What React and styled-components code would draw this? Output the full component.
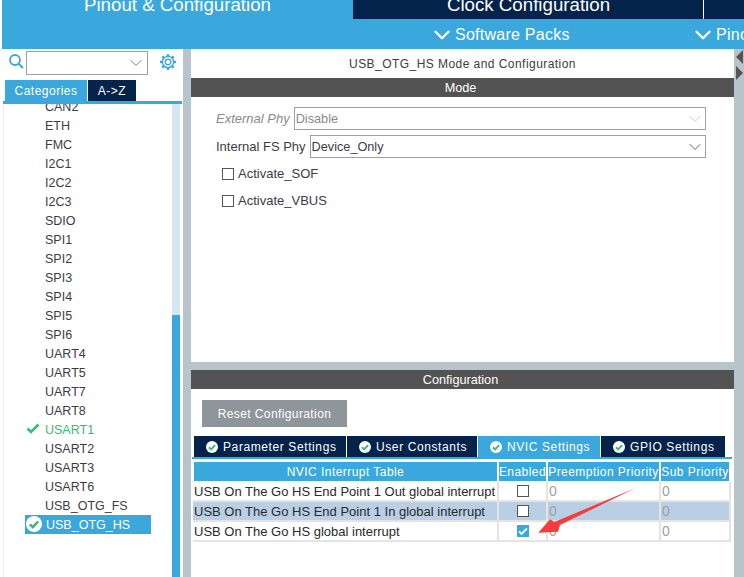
import React from 'react';
import styled, { createGlobalStyle } from 'styled-components';
import { ChevronDown } from 'lucide-react';

const Global = createGlobalStyle`
  html, body { margin: 0; padding: 0; background: #fff; overflow: hidden; }
  * { box-sizing: border-box; }
  #root { width: 744px; height: 577px; }
`;
const BLUE = '#3aa8dc';
const NAVY = '#03234b';
const GRAY = '#b8c4cb';

const Page = styled.div`
  position: relative;
  width: 744px; height: 577px; overflow: hidden;
  display: flex; flex-direction: column;
  font-family: "Liberation Sans", Arial, sans-serif;
  font-size: 12px; color: #3c3c46;
`;
const Header = styled.div`
  height: 49px; flex: none; margin-left: 2px; background: ${BLUE};
  display: flex; flex-direction: column;
`;
const TopTabs = styled.div`display: flex; height: 19px; overflow: hidden; background: ${NAVY};`;
const TopTab = styled.div`
  width: ${p => p.$w}px; flex: none; height: 19px; display: flex; justify-content: center; align-items: flex-end;
  padding-bottom: 5px; line-height: 19px; margin-right: 1px; color: #fff; font-size: 18.7px; white-space: nowrap;
  background: ${p => (p.$active ? BLUE : NAVY)};
  border-right: ${p => (p.$rule ? '1px solid #fff' : 'none')};
`;
const SubBar = styled.div`
  height: 30px; display: flex; align-items: center; color: #fff; font-size: 16px; letter-spacing: .25px;
  padding: 1px 0 0 427px; white-space: nowrap; overflow: hidden;
`;
const SubItem = styled.div`
  display: flex; align-items: center; width: ${p => p.$w}px; flex: none;
  svg { flex: none; }
`;
const Body = styled.div`flex: 1; display: flex; min-height: 0;`;
const Side = styled.div`
  width: 183px; flex: none; display: flex; flex-direction: column; padding-left: 3px; background: #fff;
`;
const SearchRow = styled.div`
  height: 31px; display: flex; align-items: center; padding: 0 0 6px 6px; color: ${BLUE};
  svg { flex: none; }
`;
const Combo = styled.div`
  width: 122px; height: 24px; margin: 2px 0 0 2px; border: 1px solid #a0a0a0; display: flex; align-items: center; justify-content: flex-end;
  padding-right: 1px; color: #7a7a7a; background: #fff;
`;
const GearWrap = styled.div`margin: 0 0 0 11px; display: flex;`;
const SideTabs = styled.div`display: flex; height: 21px; padding-left: 2px; gap: 1px;`;
const SideTab = styled.div`
  width: ${p => p.$w}px; height: 21px; display: flex; align-items: center; justify-content: center;
  color: #fff; letter-spacing: .5px; background: ${p => (p.$active ? BLUE : NAVY)};
`;
const SideRule = styled.div`height: 3px; background: ${BLUE}; margin-right: 1px;`;
const ListWrap = styled.div`
  flex: 1; display: flex; overflow: hidden; min-height: 0; border-left: 1px solid #eee;
`;
const List = styled.div`
  flex: 1; margin-top: -7px; display: flex; flex-direction: column; padding-left: 21px; min-width: 0;
`;
const Row = styled.div`
  height: 19px; width: 126px; flex: none; display: flex; align-items: center; position: relative; font-size: 12.5px;
  color: ${p => (p.$ok ? '#3cb878' : p.$sel ? '#fff' : '#3c3c46')};
  background: ${p => (p.$sel ? BLUE : 'transparent')};
  padding-left: ${p => (p.$sel ? 21 : 20)}px;
`;
const RowIcon = styled.span`position: absolute; left: 1px; top: 1px; display: flex;`;
const Track = styled.div`
  width: 8px; margin-right: 3px; flex: none; background: #d6e6f3; display: flex; flex-direction: column; justify-content: flex-end;
`;
const Thumb = styled.div`height: 262px; background: ${BLUE};`;
const Splitter = styled.div`width: ${p => p.$w || 8}px; flex: none; background: ${GRAY};`;
const Main = styled.div`width: 543px; flex: none; display: flex; flex-direction: column;`;
const Pane = styled.div`
  height: ${p => p.$h}px; flex: none; background: #fff; display: flex; flex-direction: column;
`;
const PaneTitle = styled.div`height: 29px; display: flex; align-items: center; justify-content: center; letter-spacing: .45px;`;
const Bar = styled.div`
  height: 19px; background: #535353; color: #fff; display: flex; align-items: center; justify-content: center; flex: none;
  font-size: 12.7px; padding-right: 4px;
`;
const Form = styled.div`display: flex; flex-direction: column; padding: 10px 28px 0 25px;`;
const FieldRow = styled.div`display: flex; align-items: center; height: 23px; margin-bottom: 5px; gap: ${p => p.$gap}px;`;
const Label = styled.span`
  white-space: nowrap; font-size: 13px;
  ${p => p.$off && 'font-style: italic; color: #8a8a8a;'}
`;
const Select = styled.div`
  flex: 1; height: 23px; border: 1px solid #a0a0a0; padding: 0 0 0 1px; display: flex; align-items: center; justify-content: space-between;
  font-size: 12.7px; color: ${p => (p.$off ? '#8a8a8a' : '#3c3c46')};
`;
const Checks = styled.div`display: flex; flex-direction: column; margin-top: -3px;`;
const CheckRow = styled.label`
  display: flex; align-items: center; gap: 4px; height: 27px; padding-left: 6px; font-size: 13px;
`;
const Box = styled.span`
  width: 12px; height: 12px; border: 1px solid #555; display: inline-flex; background: #fff; flex: none;
`;
const Divider = styled.div`height: 8px; flex: none; background: ${GRAY};`;
const ConfigBody = styled.div`padding: 11px 0 0 1px; display: flex; flex-direction: column;`;
const Reset = styled.div`
  margin-left: 10px; width: 145px; height: 27px; background: #8e959b; color: #fff; display: flex; align-items: center; justify-content: center; letter-spacing: .4px;
`;
const Tabs = styled.div`display: flex; height: 21px; margin: 9px 0 0 2px; gap: 1px;`;
const Tab = styled.div`
  width: ${p => p.$w}px; height: ${p => (p.$active ? 23 : 21)}px; flex: none; background: ${p => (p.$active ? BLUE : NAVY)}; color: #fff;
  display: flex; align-items: center; gap: 5px; padding: 0 0 ${p => (p.$active ? 2 : 0)}px 12px; letter-spacing: .6px; white-space: nowrap;
`;
const TabRule = styled.div`height: 2px; width: 540px; background: ${BLUE}; flex: none;`;
const Table = styled.div`
  margin: 3px 0 0 1px; width: 538px; display: grid; grid-template-columns: 306px 49px 113px 70px;
`;
const Th = styled.div`
  height: 20px; background: ${BLUE}; color: #fff; display: flex; align-items: center; justify-content: center; border-right: 2px solid #fff;
  border-left: ${p => (p.$first ? '1px solid #fff' : 'none')};
  border-bottom: 1px solid #fff; letter-spacing: .45px; white-space: nowrap; overflow: hidden;
`;
const Td = styled.div`
  height: 20px; display: flex; align-items: center; background: ${p => (p.$alt ? '#b8cfe5' : '#fff')};
  border-right: 2px solid #e4e4e4; border-bottom: 2px solid #e4e4e4; white-space: nowrap; overflow: hidden;
  padding-left: 1px; color: ${p => (p.$num ? '#a0a0a0' : '#2a2a2a')};
  justify-content: ${p => (p.$center ? 'center' : 'flex-start')};
  font-size: ${p => (p.$num ? 14 : 13)}px;
`;
const RBox = styled.span`
  width: 12px; height: 12px; display: inline-flex; align-items: center; justify-content: center; border: 1px solid ${p => (p.$on ? BLUE : '#555')};
  background: ${p => (p.$on ? BLUE : '#fff')};
`;
const ArrowMark = styled.svg`position: absolute; left: 530px; top: 480px; pointer-events: none;`;
const Collapse = styled.svg`position: absolute; left: 735px; top: 49px;`;

const Tick = ({ c = '#3cb878', s = 14 }) => (
  <svg width={s} height={s} viewBox="0 0 14 14"><path d="M1.5 7.5 L5 11 L12.5 3.5" fill="none" stroke={c} strokeWidth="2.6" /></svg>
);
const Round = ({ s = 12 }) => (
  <svg width={s} height={s} viewBox="0 0 14 14" style={{ flex: 'none' }}>
    <circle cx="7" cy="7" r="7" fill="#fff" />
    <path d="M3.4 7.3 L6 9.8 L10.6 4.8" fill="none" stroke="#3cb878" strokeWidth="2.2" />
  </svg>
);
const Magnifier = () => (
  <svg width="15" height="15" viewBox="0 0 15 15" fill="none" stroke="currentColor">
    <circle cx="6" cy="6" r="5" strokeWidth="1.8" />
    <path d="M9.6 9.6 L14 14" strokeWidth="2" />
  </svg>
);
const Gear = () => (
  <svg width="18" height="18" viewBox="0 0 18 18" fill="none" stroke="currentColor">
    <circle cx="9" cy="9" r="2.8" strokeWidth="1.3" />
    <circle cx="9" cy="9" r="5.6" strokeWidth="1.4" />
    <g strokeWidth="2.4">
      {[0, 45, 90, 135, 180, 225, 270, 315].map(a => (
        <path key={a} d="M9 1 V3.4" transform={`rotate(${a} 9 9)`} />
      ))}
    </g>
  </svg>
);

const names = ['CAN2','ETH','FMC','I2C1','I2C2','I2C3','SDIO','SPI1','SPI2','SPI3','SPI4','SPI5','SPI6','UART4','UART5','UART7','UART8','USART1','USART2','USART3','USART6','USB_OTG_FS','USB_OTG_HS'];
const rows = [
  ['USB On The Go HS End Point 1 Out global interrupt', false, false],
  ['USB On The Go HS End Point 1 In global interrupt', false, true],
  ['USB On The Go HS global interrupt', true, false],
];

export default function App() {
  return (
    <Page>
      <Global />
      <Header>
        <TopTabs>
          <TopTab $w={351} $active>Pinout &amp; Configuration</TopTab>
          <TopTab $w={350} $rule>Clock Configuration</TopTab>
        </TopTabs>
        <SubBar>
          <SubItem $w={261}><ChevronDown size={26} strokeWidth={2.2} />Software Packs</SubItem>
          <SubItem $w={60}><ChevronDown size={26} strokeWidth={2.2} />Pinout</SubItem>
        </SubBar>
      </Header>
      <Body>
        <Side>
          <SearchRow>
            <Magnifier />
            <Combo><ChevronDown size={20} strokeWidth={1.2} /></Combo>
            <GearWrap><Gear /></GearWrap>
          </SearchRow>
          <SideTabs>
            <SideTab $w={82} $active>Categories</SideTab>
            <SideTab $w={48}>A-&gt;Z</SideTab>
          </SideTabs>
          <SideRule />
          <ListWrap>
            <List>
              {names.map(n => (
                <Row key={n} $ok={n === 'USART1'} $sel={n === 'USB_OTG_HS'}>
                  {n === 'USART1' && <RowIcon><Tick /></RowIcon>}
                  {n === 'USB_OTG_HS' && <RowIcon><Round s={16} /></RowIcon>}
                  {n}
                </Row>
              ))}
            </List>
            <Track><Thumb /></Track>
          </ListWrap>
        </Side>
        <Splitter />
        <Main>
          <Pane $h={313}>
            <PaneTitle>USB_OTG_HS Mode and Configuration</PaneTitle>
            <Bar>Mode</Bar>
            <Form>
              <FieldRow $gap={4}><Label $off>External Phy</Label><Select $off>Disable<ChevronDown size={20} strokeWidth={1.1} color="#c8c8c8" /></Select></FieldRow>
              <FieldRow $gap={4}><Label>Internal FS Phy</Label><Select>Device_Only<ChevronDown size={20} strokeWidth={1.2} color="#666" /></Select></FieldRow>
              <Checks>
                <CheckRow><Box />Activate_SOF</CheckRow>
                <CheckRow><Box />Activate_VBUS</CheckRow>
              </Checks>
            </Form>
          </Pane>
          <Divider />
          <Pane $h={207}>
            <Bar>Configuration</Bar>
            <ConfigBody>
              <Reset>Reset Configuration</Reset>
              <Tabs>
                <Tab $w={152}><Round />Parameter Settings</Tab>
                <Tab $w={130}><Round />User Constants</Tab>
                <Tab $w={122} $active><Round />NVIC Settings</Tab>
                <Tab $w={124}><Round />GPIO Settings</Tab>
              </Tabs>
              <TabRule />
              <Table>
                <Th $first>NVIC Interrupt Table</Th><Th>Enabled</Th><Th>Preemption Priority</Th><Th>Sub Priority</Th>
                {rows.map(([t, on, alt]) => (
                  <React.Fragment key={t}>
                    <Td $alt={alt}>{t}</Td>
                    <Td $alt={alt} $center><RBox $on={on}>{on && <Tick c="#fff" s={10} />}</RBox></Td>
                    <Td $alt={alt} $num>0</Td>
                    <Td $alt={alt} $num>0</Td>
                  </React.Fragment>
                ))}
              </Table>
            </ConfigBody>
          </Pane>
        </Main>
        <Splitter $w={10} />
      </Body>
      <Collapse width="9" height="32" viewBox="0 0 9 32">
        <path d="M8 1 V15 L1 8 Z" fill="#555" /><path d="M1 17 V31 L8 24 Z" fill="#555" />
      </Collapse>
      <ArrowMark width="110" height="60" viewBox="530 480 110 60">
        <path d="M538.3 532.7 L550 519.3 L554.3 522 L635 488.3 L560 525 L558 531.7 Z" fill="#f63c3c" />
      </ArrowMark>
    </Page>
  );
}
